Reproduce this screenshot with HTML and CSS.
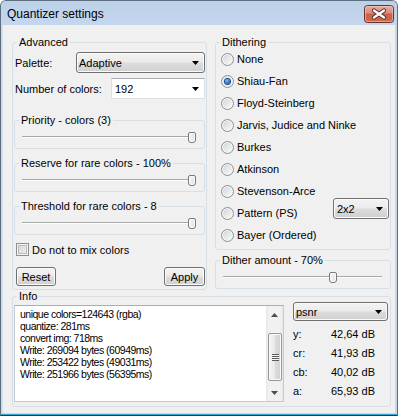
FILE: index.html
```html
<!DOCTYPE html>
<html>
<head>
<meta charset="utf-8">
<title>Quantizer settings</title>
<link rel="stylesheet" href="styles.css">
</head>
<body>
<div class="window">
  <div class="titlebar">
    <span class="title">Quantizer settings</span>
    <span class="close">
      <svg width="30" height="18" viewBox="0 0 30 18">
        <defs>
          <linearGradient id="cg" x1="0" y1="0" x2="0" y2="1">
            <stop offset="0" stop-color="#eab0a4"/>
            <stop offset="0.45" stop-color="#d88a7b"/>
            <stop offset="0.5" stop-color="#c9604b"/>
            <stop offset="1" stop-color="#cf6a4f"/>
          </linearGradient>
        </defs>
        <rect x="0.5" y="0.5" width="29" height="17" rx="3" fill="url(#cg)" stroke="#6b3128"/>
        <rect x="1.5" y="1.5" width="27" height="15" rx="2" fill="none" stroke="#f5d0c6" stroke-opacity="0.55"/>
        <path d="M10 5.5 L20 12.5 M20 5.5 L10 12.5" stroke="#553029" stroke-width="4.2" stroke-linecap="round"/>
        <path d="M10 5.5 L20 12.5 M20 5.5 L10 12.5" stroke="#ffffff" stroke-width="2.3" stroke-linecap="round"/>
      </svg>
    </span>
  </div>
  <div class="client">
    <div class="top">
      <fieldset class="group advanced">
        <legend>Advanced</legend>
        <div class="adv-body">
          <div class="row">
            <span class="lbl">Palette:</span>
            <div class="combo combo-btn w-palette"><span>Adaptive</span><svg class="arrow" width="7" height="4" viewBox="0 0 7 4"><path d="M0 0H7L3.5 4Z" fill="#000"/></svg></div>
          </div>
          <div class="row row2">
            <span class="lbl">Number of colors:</span>
            <div class="combo combo-edit w-num"><span>192</span><svg class="arrow" width="7" height="4" viewBox="0 0 7 4"><path d="M0 0H7L3.5 4Z" fill="#000"/></svg></div>
          </div>
          <fieldset class="group sub first">
            <legend>Priority - colors (3)</legend>
            <div class="slider"><div class="thumb" style="margin-left: calc((100% - 8px) * 1)"></div></div>
          </fieldset>
          <fieldset class="group sub">
            <legend>Reserve for rare colors - 100%</legend>
            <div class="slider"><div class="thumb" style="margin-left: calc((100% - 8px) * 1)"></div></div>
          </fieldset>
          <fieldset class="group sub">
            <legend>Threshold for rare colors - 8</legend>
            <div class="slider"><div class="thumb" style="margin-left: calc((100% - 8px) * 1)"></div></div>
          </fieldset>
          <div class="check"><span class="box"></span><span>Do not to mix colors</span></div>
          <div class="buttons">
            <span class="btn w-reset">Reset</span>
            <span class="btn w-apply">Apply</span>
          </div>
        </div>
      </fieldset>
      <div class="rightcol">
        <fieldset class="group dithering">
          <legend>Dithering</legend>
          <div class="radios">
            <div class="radio-row"><span class="radio"></span><span>None</span></div>
            <div class="radio-row"><span class="radio on"></span><span>Shiau-Fan</span></div>
            <div class="radio-row"><span class="radio"></span><span>Floyd-Steinberg</span></div>
            <div class="radio-row"><span class="radio"></span><span>Jarvis, Judice and Ninke</span></div>
            <div class="radio-row"><span class="radio"></span><span>Burkes</span></div>
            <div class="radio-row"><span class="radio"></span><span>Atkinson</span></div>
            <div class="radio-row"><span class="radio"></span><span>Stevenson-Arce</span></div>
            <div class="radio-row"><span class="radio"></span><span>Pattern (PS)</span></div>
            <div class="radio-row"><span class="radio"></span><span>Bayer (Ordered)</span></div>
            <div class="combo combo-btn w-pattern"><span>2x2</span><svg class="arrow" width="7" height="4" viewBox="0 0 7 4"><path d="M0 0H7L3.5 4Z" fill="#000"/></svg></div>
          </div>
        </fieldset>
        <fieldset class="group amount">
          <legend>Dither amount - 70%</legend>
          <div class="slider"><div class="thumb" style="margin-left: calc((100% - 8px) * 0.7)"></div></div>
        </fieldset>
      </div>
    </div>
    <fieldset class="group info">
      <legend>Info</legend>
      <div class="info-body">
        <div class="log">
          <div class="log-text">
            <div>unique colors=124643 (rgba)</div>
            <div>quantize: 281ms</div>
            <div>convert img: 718ms</div>
            <div>Write: 269094 bytes (60949ms)</div>
            <div>Write: 253422 bytes (49031ms)</div>
            <div>Write: 251966 bytes (56395ms)</div>
          </div>
          <div class="vscroll">
            <div class="sb-arrow"><svg width="7" height="4" viewBox="0 0 7 4"><path d="M0 4H7L3.5 0Z" fill="#4d4d4d"/></svg></div>
            <div class="sb-track"><div class="sb-thumb"><span class="grip"></span></div></div>
            <div class="sb-arrow"><svg width="7" height="4" viewBox="0 0 7 4"><path d="M0 0H7L3.5 4Z" fill="#4d4d4d"/></svg></div>
          </div>
        </div>
        <div class="metrics">
          <div class="combo combo-btn w-psnr"><span>psnr</span><svg class="arrow" width="7" height="4" viewBox="0 0 7 4"><path d="M0 0H7L3.5 4Z" fill="#000"/></svg></div>
          <div class="metric first"><span>y:</span><span>42,64 dB</span></div>
          <div class="metric"><span>cr:</span><span>41,93 dB</span></div>
          <div class="metric"><span>cb:</span><span>40,02 dB</span></div>
          <div class="metric"><span>a:</span><span>65,93 dB</span></div>
        </div>
      </div>
    </fieldset>
  </div>
</div>
</body>
</html>
```

FILE: styles.css
```css
html, body {
  margin: 0;
  padding: 0;
  background: #ffffff;
}
body {
  font-family: "Liberation Sans", Arial, sans-serif;
  font-size: 11px;
  color: #000;
}
.window {
  width: 398px;
  height: 416px;
  box-sizing: border-box;
  border: 1px solid #5f6f82;
  border-bottom-color: #1e3a52;
  border-radius: 6px 6px 0 0;
  background: #c4d7ee;
  padding: 0 2px 2px 2px;
  display: flex;
  flex-direction: column;
  overflow: hidden;
  box-shadow: inset 0 -1px 0 #35a9d8;
}
.titlebar {
  height: 24px;
  flex: none;
  display: flex;
  align-items: center;
  margin: 0 -2px;
  padding: 0 3px 0 6px;
  background: linear-gradient(#bcd0e8, #c4d7ee);
}
.title {
  font-size: 12px;
  line-height: 14px;
  margin-top: 1px;
}
.close {
  margin-left: auto;
  width: 30px;
  height: 18px;
  margin-top: 2px;
  display: block;
}
.close svg { display: block; }
.client {
  flex: 1;
  background: #f0f0f0;
  padding: 11px 4px 2px 9px;
  display: flex;
  flex-direction: column;
  border-left: 1px solid #d9e3ef;
  margin-left: -1px;
}
.top {
  display: flex;
  gap: 8px;
  height: 254px;
}

/* group boxes */
fieldset.group {
  margin: 0;
  padding: 0;
  min-width: 0;
  border: 1px solid #d5dfe5;
  border-radius: 3px;
}
fieldset.group > legend {
  padding: 0 2px;
  margin-left: 4px;
  line-height: 13px;
  height: 13px;
  white-space: nowrap;
}
.advanced {
  width: 195px;
  flex: none;
  box-sizing: border-box;
}
.adv-body {
  padding: 3px 1px 3px 1px;
  display: flex;
  flex-direction: column;
}
.row {
  display: flex;
  align-items: center;
  height: 21px;
}
.row2 { margin-top: 5px; }
.lbl {
  flex: 1;
  padding-left: 1px;
}
.combo {
  height: 21px;
  box-sizing: border-box;
  display: flex;
  align-items: center;
  justify-content: space-between;
  flex: none;
}
.combo-btn {
  border: 1px solid #707070;
  border-radius: 3px;
  background: linear-gradient(#f3f3f3 0%, #ebebeb 48%, #dddddd 52%, #cfcfcf 100%);
  box-shadow: inset 0 0 0 1px #fbfbfb;
  padding: 0 5px 0 2px;
}
.combo-edit {
  border: 1px solid #dbdfe6;
  border-top-color: #abadb3;
  background: #fff;
  padding: 0 5px 0 3px;
}
.arrow { display: block; flex: none; }
.w-palette { width: 129px; }
.w-num { width: 94px; }
.w-pattern { width: 56px; padding-left: 3px; }
.w-psnr { width: 95px; height: 19px; }

.sub {
  margin: 0 0 0 2px;
}
.sub > legend { margin-left: 3px; }
.sub.first { margin-top: 15px; }
.sub + .sub { margin-top: 8px; }
.sub .slider {
  margin: 5px 8px 5px 7px;
}

.slider {
  height: 11px;
  display: flex;
  background:
    linear-gradient(#a8a8a8, #a8a8a8) 0 4px / 100% 1px no-repeat,
    linear-gradient(#ffffff, #ffffff) 0 5px / 100% 1px no-repeat;
}
.thumb {
  width: 8px;
  height: 11px;
  box-sizing: border-box;
  border: 1px solid #7a7a7a;
  border-radius: 2px 2px 3px 3px;
  background: linear-gradient(90deg, #f7f7f7, #e2e2e2);
  box-shadow: inset 0 0 0 1px #fcfcfc;
  flex: none;
}

.check {
  display: flex;
  align-items: center;
  height: 13px;
  margin-top: 8px;
  margin-left: 2px;
}
.box {
  width: 13px;
  height: 13px;
  box-sizing: border-box;
  border: 1px solid #8e8f8f;
  background: linear-gradient(135deg, #cfd2d6 0%, #f3f3f3 100%);
  box-shadow: inset 0 0 0 1px #f4f4f4, inset 0 0 0 2px #b9bcc0;
  margin-right: 3px;
  flex: none;
}
.buttons {
  display: flex;
  justify-content: space-between;
  margin-top: 11px;
  padding-left: 2px;
}
.btn {
  height: 19px;
  box-sizing: border-box;
  border: 1px solid #707070;
  border-radius: 3px;
  background: linear-gradient(#f3f3f3 0%, #ebebeb 48%, #dddddd 52%, #cfcfcf 100%);
  box-shadow: inset 0 0 0 1px #fbfbfb;
  display: flex;
  align-items: center;
  justify-content: center;
}
.w-reset { width: 40px; }
.w-apply { width: 41px; }

/* right column */
.rightcol {
  flex: 1;
  min-width: 0;
  display: flex;
  flex-direction: column;
  gap: 4px;
}
.dithering {
  height: 214px;
  box-sizing: border-box;
}
.radios {
  margin-top: -1px;
  padding: 0 1px 0 5px;
  display: grid;
  grid-template-columns: minmax(0, 1fr) auto;
  grid-auto-rows: 22px;
}
.radio-row {
  grid-column: 1;
  display: flex;
  align-items: center;
  white-space: nowrap;
}
.radio {
  width: 13px;
  height: 13px;
  box-sizing: border-box;
  border-radius: 50%;
  border: 1px solid #8e8f8f;
  background: linear-gradient(135deg, #cdd0d4 0%, #e9eaeb 55%, #fbfbfb 100%);
  box-shadow: inset 0 0 0 1px #f6f6f6;
  margin-right: 3px;
  flex: none;
  display: flex;
  align-items: center;
  justify-content: center;
}
.radio.on::after {
  content: "";
  width: 5px;
  height: 5px;
  border-radius: 50%;
  background: radial-gradient(circle at 40% 35%, #8cc4f3 0, #2a6fc0 55%, #123e7c 100%);
  box-shadow: 0 0 0 1px #1c4f8f;
}
.w-pattern {
  grid-column: 2;
  grid-row: 7 / 9;
  align-self: start;
  margin-top: 18px;
}
.amount {
  height: 35px;
  box-sizing: border-box;
}
.amount .slider {
  margin: 5px 8px 5px 7px;
}

/* info */
.info {
  margin-top: 4px;
  height: 117px;
  box-sizing: border-box;
}
.info > legend { margin-left: 3px; }
.info-body {
  display: flex;
  padding: 0 2px 0 1px;
  gap: 9px;
}
.log {
  width: 270px;
  height: 97px;
  margin-top: 2px;
  box-sizing: border-box;
  border: 1px solid #c5cbd3;
  border-top-color: #abadb3;
  background: #fff;
  display: flex;
}
.log-text {
  flex: 1;
  padding: 2px 0 0 5px;
  font-size: 10.5px;
  letter-spacing: -0.5px;
  line-height: 12px;
  white-space: nowrap;
}
.vscroll {
  width: 17px;
  display: flex;
  flex-direction: column;
  background: linear-gradient(90deg, #e6e6e6 0%, #f1f1f1 15%, #f1f1f1 85%, #e6e6e6 100%);
}
.sb-arrow {
  height: 17px;
  display: flex;
  align-items: center;
  justify-content: center;
  flex: none;
}
.sb-arrow svg { display: block; }
.sb-track {
  flex: 1;
}
.sb-thumb {
  margin: 10px 1px 0 2px;
  height: 48px;
  box-sizing: border-box;
  border: 1px solid #979797;
  border-radius: 2px;
  background: linear-gradient(90deg, #f4f4f4 0%, #e9e9e9 48%, #dadada 52%, #d2d2d2 100%);
  box-shadow: inset 0 0 0 1px #fafafa;
  display: flex;
  align-items: center;
  justify-content: center;
}
.grip {
  width: 7px;
  height: 7px;
  background: repeating-linear-gradient(#5a5a5a 0, #5a5a5a 1px, #f4f4f4 1px, #f4f4f4 2px);
}
.metrics {
  width: 95px;
  margin-top: -1px;
  display: flex;
  flex-direction: column;
}
.metric {
  height: 19px;
  line-height: 19px;
  display: flex;
  justify-content: space-between;
  padding-right: 13px;
}
.metric.first { margin-top: 4px; }
```
